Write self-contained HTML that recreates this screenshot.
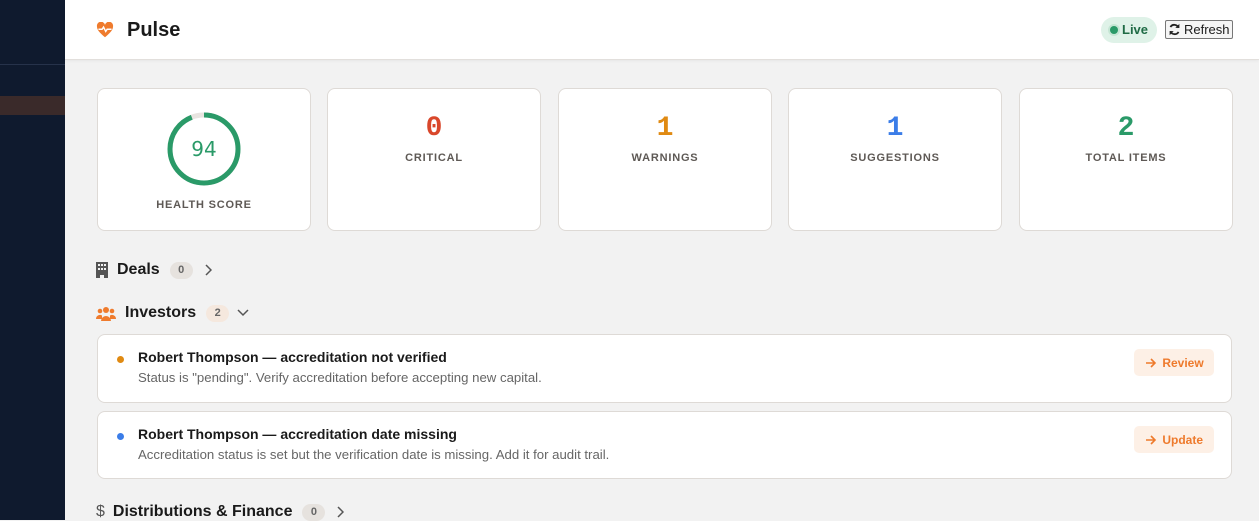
<!DOCTYPE html>
<html><head><meta charset="utf-8"><style>
*{box-sizing:border-box;margin:0;padding:0}
body{width:1259px;height:520px;overflow:hidden;background:#f2f2f2;font-family:"Liberation Sans",sans-serif;position:relative;color:#1a1a1a}
.sb{position:absolute;left:0;top:0;width:65px;height:520px;background:#0f1a2e}
.sb .l{position:absolute;top:64px;left:0;width:65px;height:1px;background:#26324a}
.sb .h{position:absolute;top:96px;left:0;width:65px;height:19px;background:#3a2a2a}
.hd{position:absolute;left:65px;top:0;right:0;height:60px;background:#fff;border-bottom:1px solid #e2dfdc;box-shadow:0 1px 3px rgba(0,0,0,.05)}
.title{position:absolute;left:62px;top:19px;font-size:20px;font-weight:bold}
.live{position:absolute;left:1036px;top:17px;width:56px;height:26px;border-radius:13px;background:#dff2e8;color:#1f6b45;font-size:13px;font-weight:bold;padding:5px 0 0 21px}
.live:before{content:"";position:absolute;left:9px;top:9px;width:8px;height:8px;border-radius:50%;background:#2a9a68;box-shadow:0 0 0 2px #c5e6d4}
.ref{position:absolute;left:1100px;top:20px;width:68px;height:19px;border:1px solid #777;border-radius:2px;background:#f5f5f5;font-size:13px;padding:1px 0 0 18px}
.card{position:absolute;top:88px;width:214px;height:143px;background:#fff;border:1px solid #dedad6;border-radius:8px;text-align:center}
.num{font-family:"Liberation Mono",monospace;font-weight:bold;font-size:28px;margin-top:25px;line-height:30px}
.lab{font-size:11px;font-weight:bold;letter-spacing:.8px;color:#5e5955;margin-top:8px}
.sec{position:absolute;left:96px;font-size:16px;font-weight:bold;display:flex;align-items:center}
.badge{display:inline-block;background:#e6e2de;color:#666;border-radius:9px;font-size:11px;font-weight:bold;width:23px;height:17px;line-height:17px;text-align:center;margin-left:10px}
.item{position:absolute;left:97px;width:1135px;background:#fff;border:1px solid #dedad6;border-radius:8px}
.item .dot{position:absolute;left:19px;top:21px;width:7px;height:7px;border-radius:50%}
.item .t{position:absolute;left:40px;top:14px;font-size:14px;font-weight:bold}
.item .d{position:absolute;left:40px;top:35px;font-size:13.2px;color:#666}
.btn{position:absolute;right:17px;top:14px;height:27px;width:80px;background:#fdf0e6;color:#ee7a2c;font-size:12px;font-weight:bold;border-radius:5px;padding:7px 0 0 12px}
.btn svg{vertical-align:-1px;margin-right:2px}
</style></head><body>
<div class="sb"><div class="l"></div><div class="h"></div></div>
<div class="hd">
<svg style="position:absolute;left:31px;top:22px" width="18" height="16" viewBox="0 0 24 22"><path d="M12 21 C5 15 1 11 1 6.5 A5.5 5.5 0 0 1 12 4 A5.5 5.5 0 0 1 23 6.5 C23 11 19 15 12 21Z" fill="#ef7b2d"/><path d="M3 10h5l2-3 3 6 2-3h6" stroke="#fff" stroke-width="2" fill="none"/></svg>
<div class="title">Pulse</div>
<div class="live">Live</div>
<div class="ref"><svg style="position:absolute;left:2px;top:2px" width="13" height="13" viewBox="0 0 16 16"><path d="M13 6A5.5 5.5 0 0 0 3 5M3 10a5.5 5.5 0 0 0 10 1" stroke="#222" stroke-width="2.2" fill="none"/><path d="M14 1v5h-5zM2 15v-5h5z" fill="#222"/></svg>Refresh</div>
</div>
<div class="card" style="left:97px">
<svg style="position:absolute;left:68px;top:22px" width="76" height="76" viewBox="0 0 76 76"><circle cx="38" cy="38" r="34" stroke="#e8e4e0" stroke-width="5" fill="none"/><circle cx="38" cy="38" r="34" stroke="#2a9a68" stroke-width="5" fill="none" stroke-dasharray="200.8 213.6" transform="rotate(-90 38 38)"/><text x="38" y="45" text-anchor="middle" font-family="DejaVu Sans,sans-serif" font-size="20" fill="#2a9a68">94</text></svg>
<div class="lab" style="position:absolute;left:0;right:0;top:102px">HEALTH SCORE</div></div>
<div class="card" style="left:327px"><div class="num" style="color:#d9472b">0</div><div class="lab">CRITICAL</div></div>
<div class="card" style="left:558px"><div class="num" style="color:#e08a12">1</div><div class="lab">WARNINGS</div></div>
<div class="card" style="left:788px"><div class="num" style="color:#3b7de8">1</div><div class="lab">SUGGESTIONS</div></div>
<div class="card" style="left:1019px"><div class="num" style="color:#2a9a68">2</div><div class="lab">TOTAL ITEMS</div></div>
<div class="sec" style="top:261px"><svg width="12" height="16" viewBox="0 0 12 16" style="margin-right:9px"><path d="M0 0h12v16h-4v-3h-4v3h-4z" fill="#555"/><path d="M2 2h2v2h-2zM5 2h2v2h-2zM8 2h2v2h-2zM2 6h2v2h-2zM5 6h2v2h-2zM8 6h2v2h-2z" fill="#f2f2f2"/></svg>Deals<span class="badge">0</span><svg width="8" height="12" style="margin-left:11px" viewBox="0 0 8 12"><path d="M2 1l5 5-5 5" stroke="#555" stroke-width="1.5" fill="none"/></svg></div>
<div class="sec" style="top:304px"><svg width="20" height="15" viewBox="0 0 20 15" style="margin-right:9px" fill="#ef7b2d"><circle cx="10" cy="4" r="3"/><circle cx="4" cy="5" r="2.3"/><circle cx="16" cy="5" r="2.3"/><path d="M5 15a5 5 0 0 1 10 0z"/><path d="M0 13a4 4 0 0 1 6-3.5v3.5zM20 13a4 4 0 0 0-6-3.5v3.5z"/></svg>Investors<span class="badge" style="background:#f5e8de">2</span><svg width="12" height="8" style="margin-left:8px" viewBox="0 0 12 8"><path d="M1 1l5 5 5-5" stroke="#555" stroke-width="1.5" fill="none"/></svg></div>
<div class="item" style="top:334px;height:69px"><div class="dot" style="background:#e08a12"></div><div class="t">Robert Thompson — accreditation not verified</div><div class="d">Status is "pending". Verify accreditation before accepting new capital.</div><div class="btn"><svg width="11" height="10" viewBox="0 0 11 10"><path d="M0 5h9M5 1l4 4-4 4" stroke="#ee7a2c" stroke-width="1.6" fill="none"/></svg> Review</div></div>
<div class="item" style="top:411px;height:68px"><div class="dot" style="background:#3b7de8"></div><div class="t">Robert Thompson — accreditation date missing</div><div class="d">Accreditation status is set but the verification date is missing. Add it for audit trail.</div><div class="btn"><svg width="11" height="10" viewBox="0 0 11 10"><path d="M0 5h9M5 1l4 4-4 4" stroke="#ee7a2c" stroke-width="1.6" fill="none"/></svg> Update</div></div>
<div class="sec" style="top:503px"><span style="color:#555;margin-right:8px;font-weight:normal">$</span>Distributions &amp; Finance<span class="badge">0</span><svg width="8" height="12" style="margin-left:11px" viewBox="0 0 8 12"><path d="M2 1l5 5-5 5" stroke="#555" stroke-width="1.5" fill="none"/></svg></div>
</body></html>
